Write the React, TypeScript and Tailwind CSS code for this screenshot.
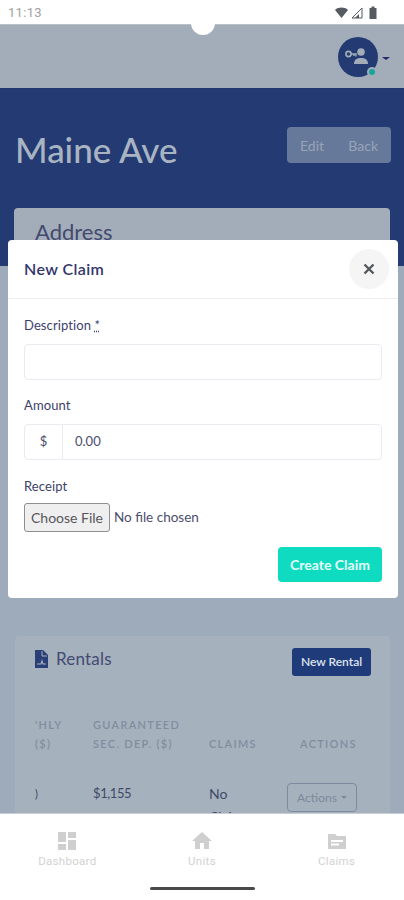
const labelClass = "text-[13px] leading-4 tracking-[0.1px] text-[#3d3f6b]";

// STATUS BAR ICONS
const StatusIcons = () => (
  <svg width="44" height="14" viewBox="0 0 44 14" className="text-[#555b60]">
    <path d="M0 4 C3.500 0.800 9.500 0.800 13 4 L6.500 12 Z" fill="currentColor" />
    <path d="M17 12 L27 2 V12 Z" fill="none" stroke="currentColor" strokeWidth="1" />
    <path d="M20 12 L24 8 V12 Z" fill="currentColor" />
    <path d="M36.500 0.500 h3 v1.500 h2 v11 h-7 V2 h2 Z" fill="currentColor" />
  </svg>
);

const Avatar = () => (
  <div className="relative w-10 h-10 rounded-full bg-[#233b72] flex items-center justify-center">
    <svg width="28" height="22" viewBox="0 0 28 22" className="text-[#a3adb9]">
      <circle cx="4.500" cy="8" r="2.600" fill="none" stroke="currentColor" strokeWidth="1.600" />
      <path d="M7 8 h5 v2.500 M10 8 v2" fill="none" stroke="currentColor" strokeWidth="1.400" />
      <circle cx="17" cy="6" r="3.800" fill="currentColor" />
      <path d="M10 18 c0-4.500 3-6 7-6 s7 1.500 7 6 Z" fill="currentColor" />
    </svg>
    <span className="absolute right-[1px] bottom-0 w-[10px] h-[10px] rounded-full bg-[#16a79a] border-2 border-[#a3adb9]" />
  </div>
);

const DashboardIcon = () => (
  <svg width="20" height="20" viewBox="0 0 20 20" fill="#cfcfcf">
    <rect x="1" y="1" width="8" height="10" />
    <rect x="11" y="1" width="8" height="6" />
    <rect x="1" y="13" width="8" height="6" />
    <rect x="11" y="9" width="8" height="10" />
  </svg>
);

const HomeIcon = () => (
  <svg width="20" height="20" viewBox="2 2 20 20" fill="#cfcfcf">
    <path d="M10 20v-6h4v6h5v-8h3L12 3 2 12h3v8z" />
  </svg>
);

const FolderIcon = () => (
  <svg width="20" height="20" viewBox="0 0 20 20">
    <path d="M1 3 h7 l2 2 h9 v13 H1 Z" fill="#cfcfcf" />
    <rect x="4" y="9" width="12" height="2" fill="#fff" />
    <rect x="4" y="12.500" width="8" height="2" fill="#fff" />
  </svg>
);

const CloseIcon = () => (
  <svg width="12" height="12" viewBox="0 0 12 12" fill="none" stroke="#55585c" strokeWidth="2.400">
    <path d="M1.500 1.500 L10.500 10.500 M10.500 1.500 L1.500 10.500" />
  </svg>
);

const NavItem = ({ icon, label }: { icon: React.ReactNode; label: string }) => (
  <div className="flex flex-col items-center gap-[3px]">
    {icon}
    <span className="text-[11.500px] leading-[14px] tracking-[0.3px] text-[#d2d2d2] font-['Roboto',sans-serif]">{label}</span>
  </div>
);

const Field = ({ label, children }: { label: React.ReactNode; children: React.ReactNode }) => (
  <div className="flex flex-col gap-[11px]">
    <label className={labelClass}>{label}</label>
    {children}
  </div>
);

// COMPONENTE NEW CLAIM
const ClaimModal = () => (
  <div className="absolute left-2 top-[240px] w-[390px] h-[358px] bg-white rounded flex flex-col">
    <div className="h-[59px] flex items-center justify-between pl-4 pr-[9px] border-b border-[#eceef2]">
      <h2 className="text-[16px] font-semibold tracking-[0.4px] text-[#33356b]">New Claim</h2>
      <button type="button" className="w-10 h-10 rounded-full bg-[#f5f5f5] flex items-center justify-center">
        <CloseIcon />
      </button>
    </div>
    <div className="flex flex-col px-4 pt-[18px]">
      <Field label={<>Description <span className="underline decoration-dotted">*</span></>}>
        <input className="h-9 w-full rounded border border-[#e9ecf1] bg-white" />
      </Field>
      <div className="mt-[17px]">
        <Field label="Amount">
          <div className="flex h-9 w-full rounded border border-[#e9ecf1] text-[13px] text-[#4b4d6e]">
            <span className="w-[38px] flex items-center justify-center border-r border-[#e9ecf1]">$</span>
            <span className="flex items-center pl-3">0.00</span>
          </div>
        </Field>
      </div>
      <div className="mt-[18px] flex flex-col gap-[9px]">
        <label className={labelClass}>Receipt</label>
        <div className="flex items-center gap-1">
          <span className="w-[86px] h-[29px] flex items-center justify-center rounded-[3px] bg-[#efefef] border border-[#8f8f8f] text-[14px] text-[#55575c]">
            Choose File
          </span>
          <span className="text-[13.500px] text-[#4b4d6e]">No file chosen</span>
        </div>
      </div>
    </div>
    <div className="flex justify-end px-4 pt-[15px]">
      <button type="button" className="w-[104px] h-[35px] rounded bg-[#0edbc0] text-[14px] font-bold text-white/90">
        Create Claim
      </button>
    </div>
  </div>
);

const RentalsCard = () => (
  <div className="ml-[15px] mr-[14px] mt-[10px] bg-[#a5b1bd] rounded-t h-[200px] overflow-hidden">
    <div className="flex items-start justify-between pl-5 pr-[19px] pt-3">
      <div className="flex items-center gap-2 -mt-[1px]">
        <svg width="13" height="18" viewBox="0 0 13 18">
          <path d="M0 0 h8 l5 5 v13 H0 Z" fill="#2a3e78" />
          <path d="M7 1 v5 h5" fill="none" stroke="#a5b1bd" strokeWidth="1" />
          <path d="M2 14 h4 l1-3 1 3 h3" fill="none" stroke="#a5b1bd" strokeWidth="1.200" />
        </svg>
        <span className="text-[17px] leading-6 tracking-[0.2px] text-[#444a72]">Rentals</span>
      </div>
      <button type="button" className="w-[79px] h-7 rounded-[3px] bg-[#203b7a] text-[12px] font-semibold text-[#dfe5ee]">
        New Rental
      </button>
    </div>
    <div className="grid grid-cols-[58px_116px_91px_auto] pl-5 pt-[39px] text-[11px] leading-[19px] font-semibold tracking-[1.300px] text-[#818d9e]">
      <div className="flex flex-col justify-end overflow-hidden whitespace-nowrap">
        <span>'HLY</span>
        <span>($)</span>
      </div>
      <div className="flex flex-col justify-end">
        <span>GUARANTEED</span>
        <span>SEC. DEP. ($)</span>
      </div>
      <span className="self-end">CLAIMS</span>
      <span className="self-end">ACTIONS</span>
    </div>
    <div className="grid grid-cols-[58px_116px_91px_auto] pl-5 pt-[29px] text-[14px] leading-[23px] text-[#3f4a68]">
      <span className="text-[11px]">)</span>
      <span className="text-[13px] tracking-[-0.4px]">$1,155</span>
      <span className="w-10">No Claims</span>
      <span className="-ml-[13px] mt-[1px] w-[70px] h-[29px] flex items-center justify-center gap-1 rounded border border-[#7e8b9e] text-[12px] text-[#7c899b]">
        Actions
        <span className="border-x-[3px] border-t-[3px] border-x-transparent border-t-[#7c899b]" />
      </span>
    </div>
  </div>
);

export default function App() {
  return (
    <div className="relative w-[404px] h-[900px] overflow-hidden flex flex-col bg-[#9dabba] font-['Lato',sans-serif]">
      {/* STATUS BAR */}
      <div className="h-6 shrink-0 bg-white flex items-center justify-between pl-2 pr-[25px] pt-[1px]">
        <span className="text-[13px] tracking-[0.3px] text-[#a2a2a2] font-['Roboto',sans-serif]">11:13</span>
        <StatusIcons />
      </div>

      {/* TOP BAR */}
      <div className="h-[65px] shrink-0 bg-[#a3adb9] flex items-center justify-end pr-[14px] gap-1 border-t border-[#b9c0c8] border-b border-b-[#1f3870]">
        <Avatar />
        <span className="mt-1 border-x-[4px] border-t-[3px] border-x-transparent border-t-[#1f2a66]" />
      </div>

      {/* HERO */}
      <div className="h-[177px] shrink-0 bg-[#233b72] px-[14px] flex flex-col">
        <div className="flex items-start justify-between pt-[38px]">
          <h1 className="ml-[1px] text-[35px] leading-[44px] font-medium text-[#a9b4c3]">Maine Ave</h1>
          <div className="mr-[-1px] w-[104px] h-9 rounded bg-[#67799a] flex items-center justify-between px-[13px] text-[14px] text-[#97a4b8]">
            <span>Edit</span>
            <span>Back</span>
          </div>
        </div>
        <div className="mt-[37px] h-[58px] rounded-t bg-[#a3adb9] px-[21px] pt-[10px] text-[22px] leading-7 text-[#44496f]">
          Address
        </div>
      </div>

      {/* MAIN */}
      <div className="flex-1 min-h-0 pt-[360px] overflow-hidden">
        <RentalsCard />
      </div>

      {/* BOTTOM NAV */}
      <div className="absolute left-0 right-0 bottom-0 h-[87px] bg-white border-t border-[#c9ced4]">
        <div className="grid grid-cols-3 pt-[17px]">
          <NavItem icon={<DashboardIcon />} label="Dashboard" />
          <NavItem icon={<HomeIcon />} label="Units" />
          <NavItem icon={<FolderIcon />} label="Claims" />
        </div>
        <div className="absolute left-[150px] top-[73px] w-[105px] h-[3px] rounded-full bg-[#4a4a4a]" />
      </div>

      {/* NOTCH */}
      <div className="absolute left-[191px] top-[11px] w-6 h-6 rounded-full bg-white" />

      <ClaimModal />
    </div>
  );
}
